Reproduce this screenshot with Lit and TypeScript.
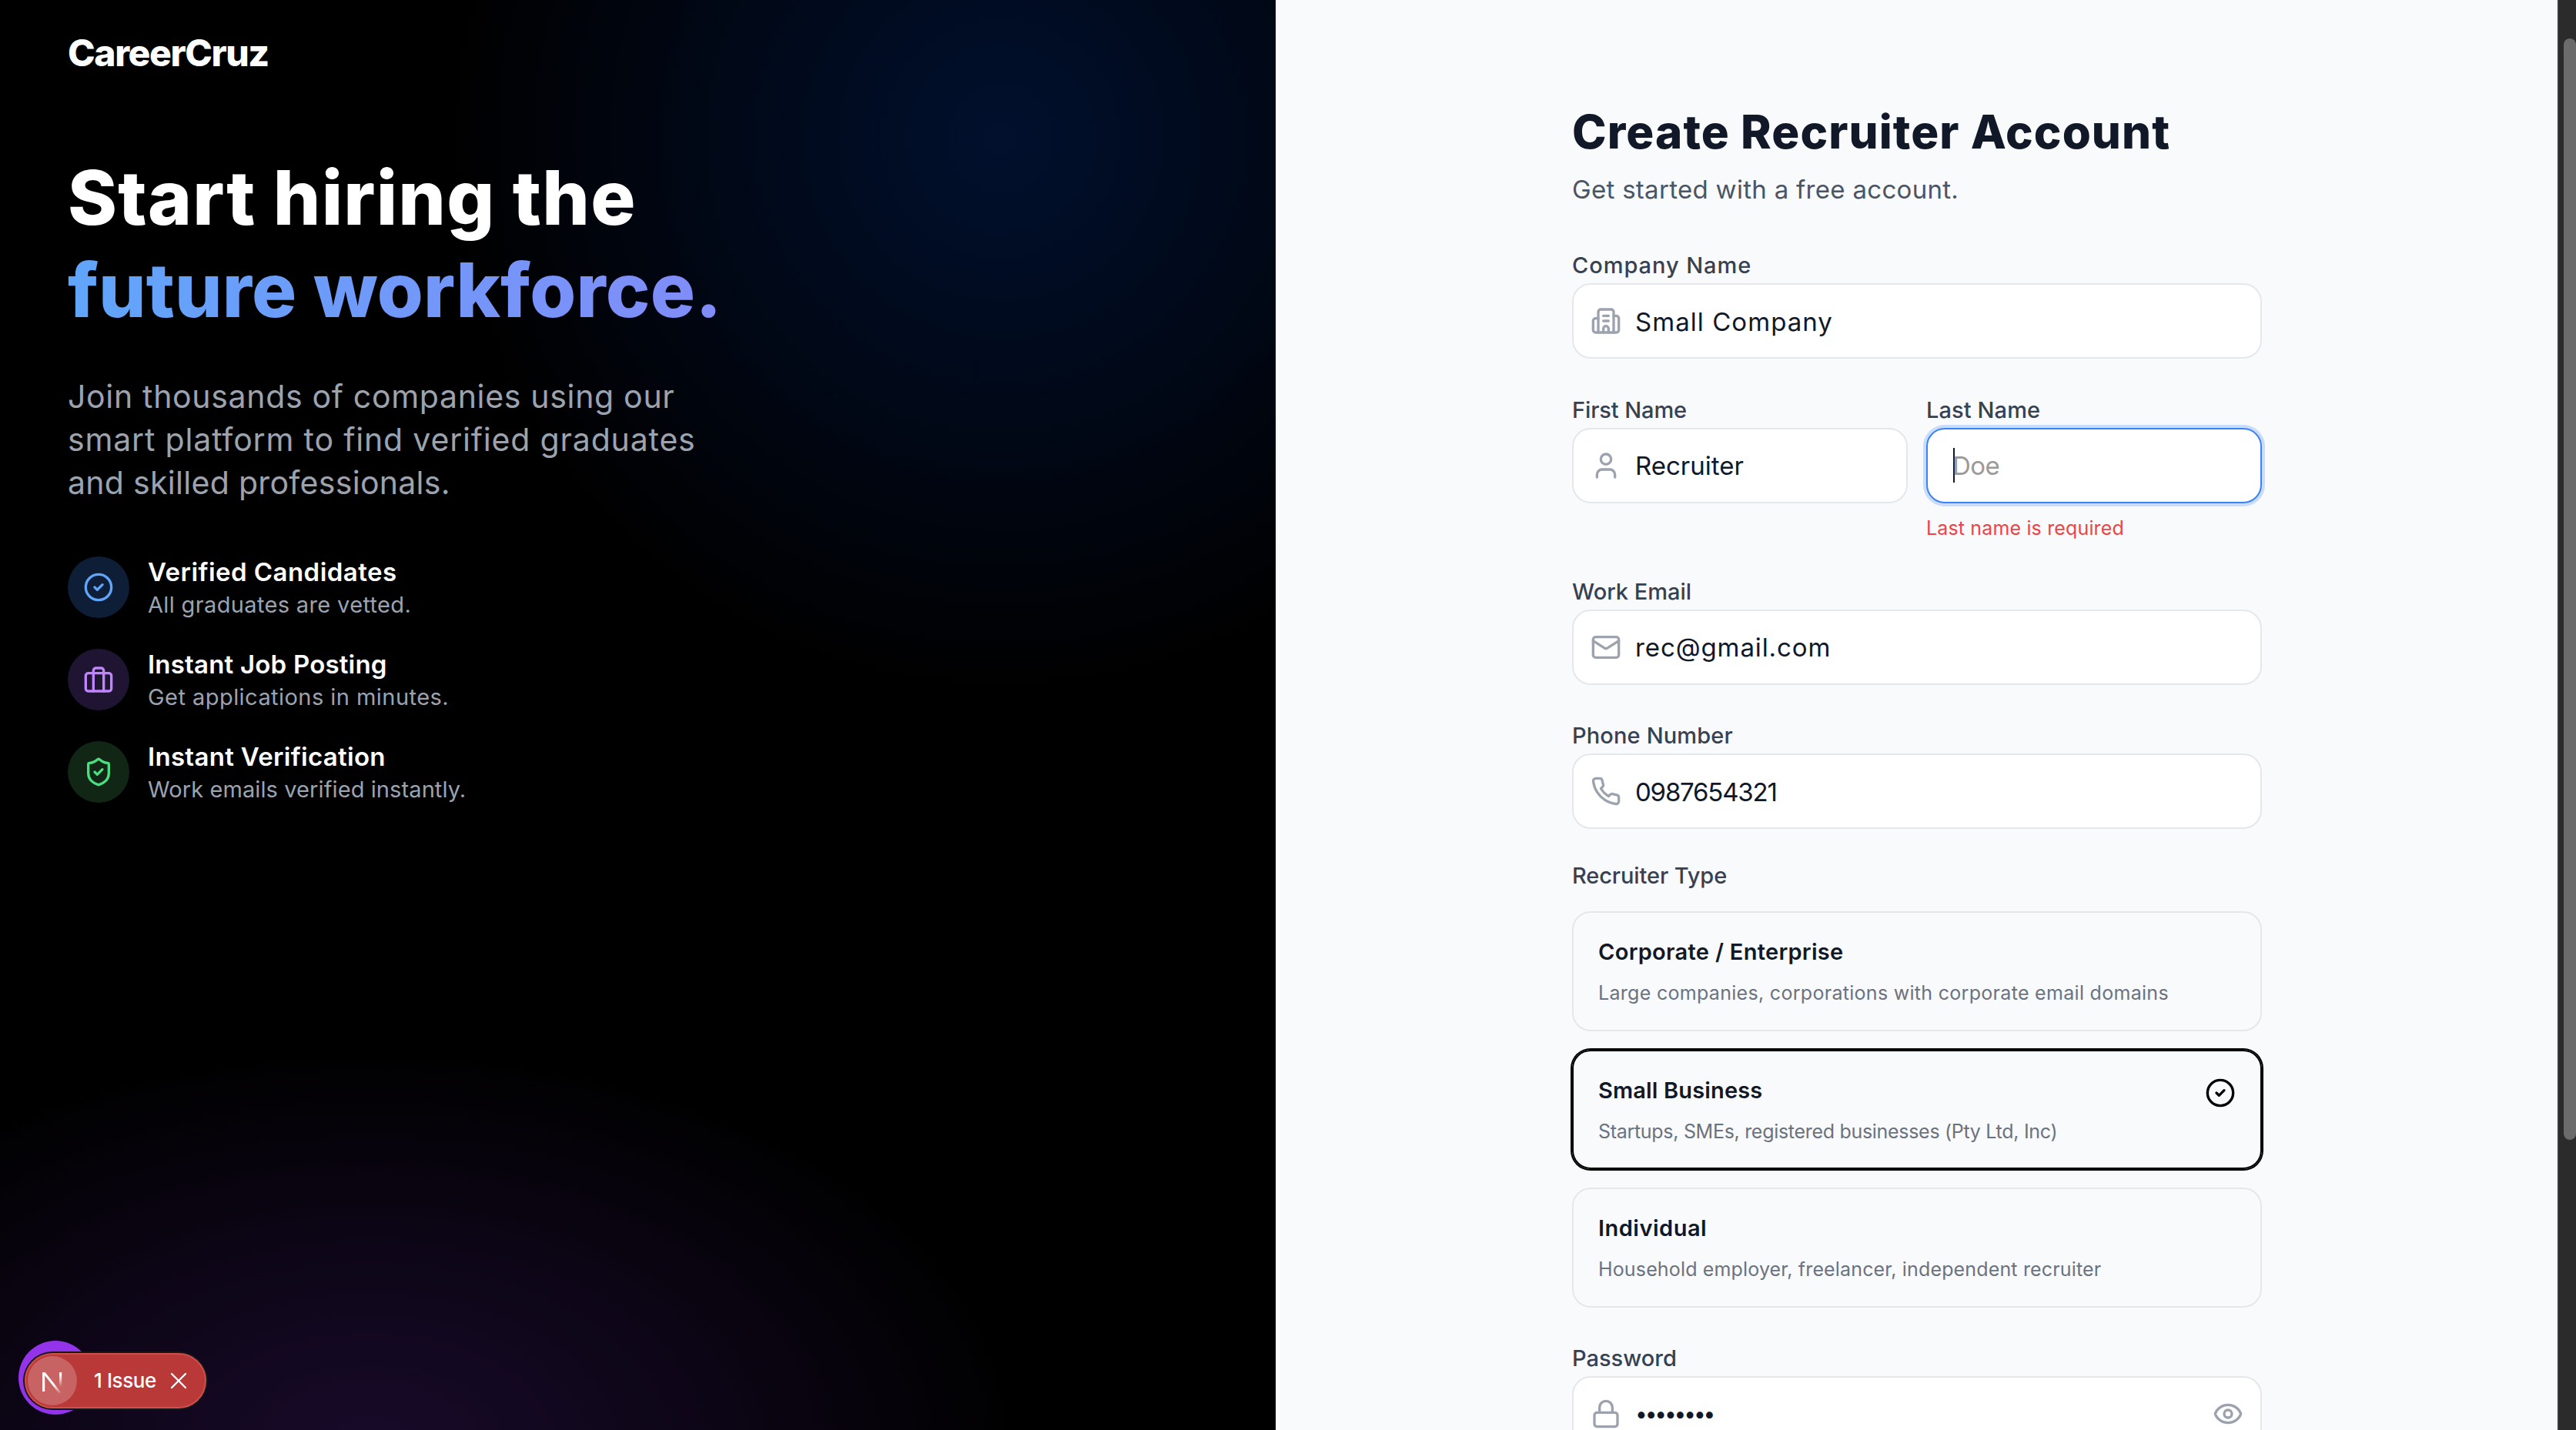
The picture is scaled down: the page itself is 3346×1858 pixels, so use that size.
import { LitElement, html, css, svg } from "lit";
import { customElement } from "lit/decorators.js";

const icon = (body: unknown, cls = "") => html`<svg class="ic ${cls}" viewBox="0 0 24 24" fill="none" stroke="currentColor" stroke-width="2" stroke-linecap="round" stroke-linejoin="round">${body}</svg>`;
const I = {
  check: svg`<circle cx="12" cy="12" r="10"/><path d="m9 12 2 2 4-4"/>`,
  brief: svg`<rect x="2" y="7" width="20" height="14" rx="2"/><path d="M16 21V5a2 2 0 0 0-2-2h-4a2 2 0 0 0-2 2v16"/>`,
  shield: svg`<path d="M20 13c0 5-3.5 7.5-7.66 8.95a1 1 0 0 1-.67-.01C7.5 20.5 4 18 4 13V6a1 1 0 0 1 1-1c2 0 4.5-1.2 6.24-2.72a1.17 1.17 0 0 1 1.52 0C14.51 3.81 17 5 19 5a1 1 0 0 1 1 1z"/><path d="m9 12 2 2 4-4"/>`,
  building: svg`<path d="M10 12h4"/><path d="M10 8h4"/><path d="M14 21v-3a2 2 0 0 0-4 0v3"/><path d="M6 10H4a2 2 0 0 0-2 2v7a2 2 0 0 0 2 2h16a2 2 0 0 0 2-2v-9a2 2 0 0 0-2-2h-2"/><path d="M6 21V5a2 2 0 0 1 2-2h8a2 2 0 0 1 2 2v16"/>`,
  user: svg`<path d="M19 21v-2a4 4 0 0 0-4-4H9a4 4 0 0 0-4 4v2"/><circle cx="12" cy="7" r="4"/>`,
  mail: svg`<rect width="20" height="16" x="2" y="4" rx="2"/><path d="m22 7-8.97 5.7a1.94 1.94 0 0 1-2.06 0L2 7"/>`,
  phone: svg`<path d="M22 16.92v3a2 2 0 0 1-2.18 2 19.79 19.79 0 0 1-8.63-3.07 19.5 19.5 0 0 1-6-6 19.79 19.79 0 0 1-3.07-8.67A2 2 0 0 1 4.11 2h3a2 2 0 0 1 2 1.72 12.84 12.84 0 0 0 .7 2.81 2 2 0 0 1-.45 2.11L8.09 9.91a16 16 0 0 0 6 6l1.27-1.27a2 2 0 0 1 2.11-.45 12.84 12.84 0 0 0 2.81.7A2 2 0 0 1 22 16.92z"/>`,
  lock: svg`<rect width="18" height="11" x="3" y="11" rx="2"/><path d="M7 11V7a5 5 0 0 1 10 0v4"/>`,
  eye: svg`<path d="M2.062 12.348a1 1 0 0 1 0-.696 10.75 10.75 0 0 1 19.876 0 1 1 0 0 1 0 .696 10.75 10.75 0 0 1-19.876 0"/><circle cx="12" cy="12" r="3"/>`,
  x: svg`<path d="M18 6 6 18"/><path d="m6 6 12 12"/>`,
};

@customElement("app-root")
export class AppRoot extends LitElement {
  static styles = css`
    :host { display: block; height: 1858px; overflow: hidden; font-family: Inter, "Liberation Sans", sans-serif; }
    * { box-sizing: border-box; }
    .app { display: flex; height: 1858px; position: relative; }
    .ic { width: 40px; height: 40px; display: block; flex: none; }
    .left { width: 1657px; flex: none; height: 100%; color: #fff; padding: 37px 0 0 88px; display: flex; flex-direction: column;
      background:
        radial-gradient(circle 720px at 1300px 180px, #01102e 0%, rgba(1,16,46,.6) 40%, rgba(1,16,46,0) 100%),
        radial-gradient(ellipse 850px 520px at 480px 1880px, #180a2a 0%, rgba(24,10,42,.55) 50%, rgba(24,10,42,0) 100%),
        #000; }
    .logo { font-size: 48px; line-height: 64px; font-weight: 800; letter-spacing: -1.4px; }
    h1 { margin: 96px 0 0; font-size: 97px; line-height: 120px; font-weight: 800; }
    .grad { display: inline-block; background: linear-gradient(90deg, #60a5fa, #818cf8); -webkit-background-clip: text; background-clip: text; color: transparent; }
    .lead { margin: 50px 0 0; font-size: 41px; line-height: 56px; color: #9ca3af; }
    .feats { margin-top: 68px; display: flex; flex-direction: column; gap: 40px; }
    .feat { height: 80px; display: flex; gap: 24px; }
    .dot { width: 80px; height: 80px; border-radius: 50%; display: flex; align-items: center; justify-content: center; flex: none; }
    .dot.blue { background: #0e1e36; color: #60a5fa; }
    .dot.purple { background: #201433; color: #c084fc; }
    .dot.green { background: #122616; color: #4ade80; }
    .ftext { margin-top: -2px; }
    .ft { font-size: 33px; line-height: 44px; font-weight: 600; display: block; }
    .fd { margin-top: 1px; font-size: 29px; line-height: 40px; color: #9ca3af; display: block; }

    .right { flex: 1; min-width: 0; background: #f9fafb; padding: 135px 0 0 385px; overflow: hidden; }
    .form { width: 896px; }
    h2 { margin: 0; font-size: 60px; line-height: 72px; font-weight: 800; color: #111827; }
    .sub { margin: 17px 0 0; font-size: 33px; line-height: 44px; color: #4b5563; }
    .group { margin-top: 45.75px; display: block; }
    .group.first { margin-top: 56px; }
    .row { display: grid; grid-template-columns: 1fr 1fr; gap: 24px; margin-top: 45.75px; }
    .row .group { margin-top: 0; }
    .lab { display: block; font-size: 29px; line-height: 42px; font-weight: 500; color: #374151; margin-bottom: 2px; }
    .field { height: 98px; background: #fff; border: 2px solid #e5e7eb; border-radius: 24px; display: flex; align-items: center; padding: 0 22px; color: #9ca3af; }
    .val { margin: 1px 0 0 18px; font-size: 33px; line-height: 44px; color: #111827; white-space: nowrap; }
    .field.focus { border-color: #3b82f6; box-shadow: 0 0 0 4px rgba(59,130,246,.25); padding-left: 32px; }
    .caret { width: 2px; height: 45px; background: #111827; flex: none; margin: 0 -3px 0 1px; }
    .ph { margin-left: 0; color: #9a9a9a; }
    .dots { margin: 0 0 0 18px; flex: 1; font-size: 28px; letter-spacing: -3.1px; }
    .err { display: block; margin-top: 16px; font-size: 25px; line-height: 32px; color: #ef4444; }
    .typegroup { margin-top: 39.75px; }
    .typegroup .lab { margin-bottom: 25px; }
    .cards { display: flex; flex-direction: column; gap: 24px; }
    .card { height: 155.5px; border: 2px solid #e5e7eb; border-radius: 24px; padding: 31px 32px 0; }
    .card.sel { border-color: #000; box-shadow: 0 0 0 2px #000; }
    .ctop { display: flex; justify-content: space-between; height: 44px; }
    .ctop .ic { margin-top: 3px; color: #000; }
    .ct { font-size: 29px; line-height: 40px; font-weight: 600; color: #111827; }
    .cd { display: block; margin-top: 13px; font-size: 25px; line-height: 32px; color: #6b7280; }

    .n12 { letter-spacing: -1.2px; }
    .n06 { letter-spacing: -.6px; }
    .n03 { letter-spacing: -.3px; }
    .n01 { letter-spacing: -.1px; }
    .p01 { letter-spacing: .1px; }
    .p015 { letter-spacing: .15px; }
    .p02 { letter-spacing: .2px; }
    .p03 { letter-spacing: .3px; }
    .p035 { letter-spacing: .35px; }
    .p045 { letter-spacing: .45px; }
    .p05 { letter-spacing: .5px; }
    .p07 { letter-spacing: .68px; }
    .p08 { letter-spacing: .83px; }
    .p09 { letter-spacing: .9px; }
    .p095 { letter-spacing: .95px; }
    .p105 { letter-spacing: 1.05px; }
    .p108 { letter-spacing: 1.08px; }
    .p12 { letter-spacing: 1.2px; }

    .bar { width: 24px; flex: none; height: 100%; background: #2b2b2b; border-left: 2px solid #3a3a3a; padding: 50px 0 0 6px; }
    .thumb { width: 16px; height: 1431px; border-radius: 8px; background: #6b6b6b; }

    .halo { position: absolute; left: 24px; top: 1742px; width: 96px; height: 96px; border-radius: 50%; background: #9333ea; }
    .pill { position: absolute; left: 32px; top: 1758px; width: 236px; height: 72px; border-radius: 36px; background: #b93838; border: 2px solid #cf4f4c; box-shadow: 0 0 0 2px #17171a; display: flex; align-items: center; padding-left: 2px; color: #fff; }
    .nmark { width: 64px; height: 64px; flex: none; display: block; }
    .issue { margin-left: 22px; font-size: 26px; line-height: 40px; font-weight: 500; letter-spacing: -.4px; white-space: nowrap; }
    .close { width: 36px; height: 36px; margin-left: 11px; stroke-width: 1.5; }
  `;

  field(ic: unknown, v: string, ls: string) {
    return html`<div class="field">${icon(ic)}<span class="val ${ls}">${v}</span></div>`;
  }

  render() {
    return html`<div class="app">
      <section class="left">
        <div class="logo">CareerCruz</div>
        <h1><span class="p12">Start hiring the</span><br /><span class="grad p02">future workforce.</span></h1>
        <p class="lead"><span class="p07">Join thousands of companies using our</span><br /><span class="p08">smart platform to find verified graduates</span><br /><span class="p03">and skilled professionals.</span></p>
        <div class="feats">
          <div class="feat"><div class="dot blue">${icon(I.check)}</div><div class="ftext"><span class="ft p045">Verified Candidates</span><span class="fd p035">All graduates are vetted.</span></div></div>
          <div class="feat"><div class="dot purple">${icon(I.brief)}</div><div class="ftext"><span class="ft p02">Instant Job Posting</span><span class="fd p045">Get applications in minutes.</span></div></div>
          <div class="feat"><div class="dot green">${icon(I.shield)}</div><div class="ftext"><span class="ft p03">Instant Verification</span><span class="fd p01">Work emails verified instantly.</span></div></div>
        </div>
      </section>
      <main class="right"><div class="form">
        <h2 class="p108">Create Recruiter Account</h2>
        <p class="sub p03">Get started with a free account.</p>
        <div class="group first"><span class="lab p095">Company Name</span>${this.field(I.building, "Small Company", "p105")}</div>
        <div class="row">
          <div class="group"><span class="lab n01">First Name</span>${this.field(I.user, "Recruiter", "")}</div>
          <div class="group"><span class="lab p01">Last Name</span>
            <div class="field focus"><i class="caret"></i><span class="val ph n06">Doe</span></div>
            <span class="err p015">Last name is required</span></div>
        </div>
        <div class="group"><span class="lab">Work Email</span>${this.field(I.mail, "rec@gmail.com", "p09")}</div>
        <div class="group"><span class="lab p015">Phone Number</span>${this.field(I.phone, "0987654321", "n12")}</div>
        <div class="group typegroup"><span class="lab n01">Recruiter Type</span>
          <div class="cards">
            <div class="card"><div class="ctop"><span class="ct p03">Corporate / Enterprise</span></div><span class="cd p03">Large companies, corporations with corporate email domains</span></div>
            <div class="card sel"><div class="ctop"><span class="ct p015">Small Business</span>${icon(I.check)}</div><span class="cd n03">Startups, SMEs, registered businesses (Pty Ltd, Inc)</span></div>
            <div class="card"><div class="ctop"><span class="ct p05">Individual</span></div><span class="cd p015">Household employer, freelancer, independent recruiter</span></div>
          </div>
        </div>
        <div class="group"><span class="lab">Password</span>
          <div class="field">${icon(I.lock)}<span class="val dots">••••••••</span>${icon(I.eye)}</div>
        </div>
      </div></main>
      <div class="bar"><div class="thumb"></div></div>
      <div class="halo"></div>
      <div class="pill">
        <svg class="nmark" viewBox="0 0 64 64">
          <defs>
            <linearGradient id="nd" x1="0" y1="0" x2="1" y2="1"><stop offset=".6" stop-color="#fff"/><stop offset="1" stop-color="#fff" stop-opacity="0"/></linearGradient>
            <linearGradient id="ns" x1="0" y1="0" x2="0" y2="1"><stop offset=".2" stop-color="#fff"/><stop offset="1" stop-color="#fff" stop-opacity="0"/></linearGradient>
          </defs>
          <circle cx="32" cy="32" r="32" fill="#fff" fill-opacity=".22"/>
          <rect x="19" y="21" width="3.2" height="25" fill="#fff"/>
          <path d="M19 21h3.6L44 48h-3.8z" fill="url(#nd)"/>
          <rect x="41" y="21" width="3.2" height="19" fill="url(#ns)"/>
        </svg>
        <span class="issue">1 Issue</span>
        ${icon(I.x, "close")}
      </div>
    </div>`;
  }
}
